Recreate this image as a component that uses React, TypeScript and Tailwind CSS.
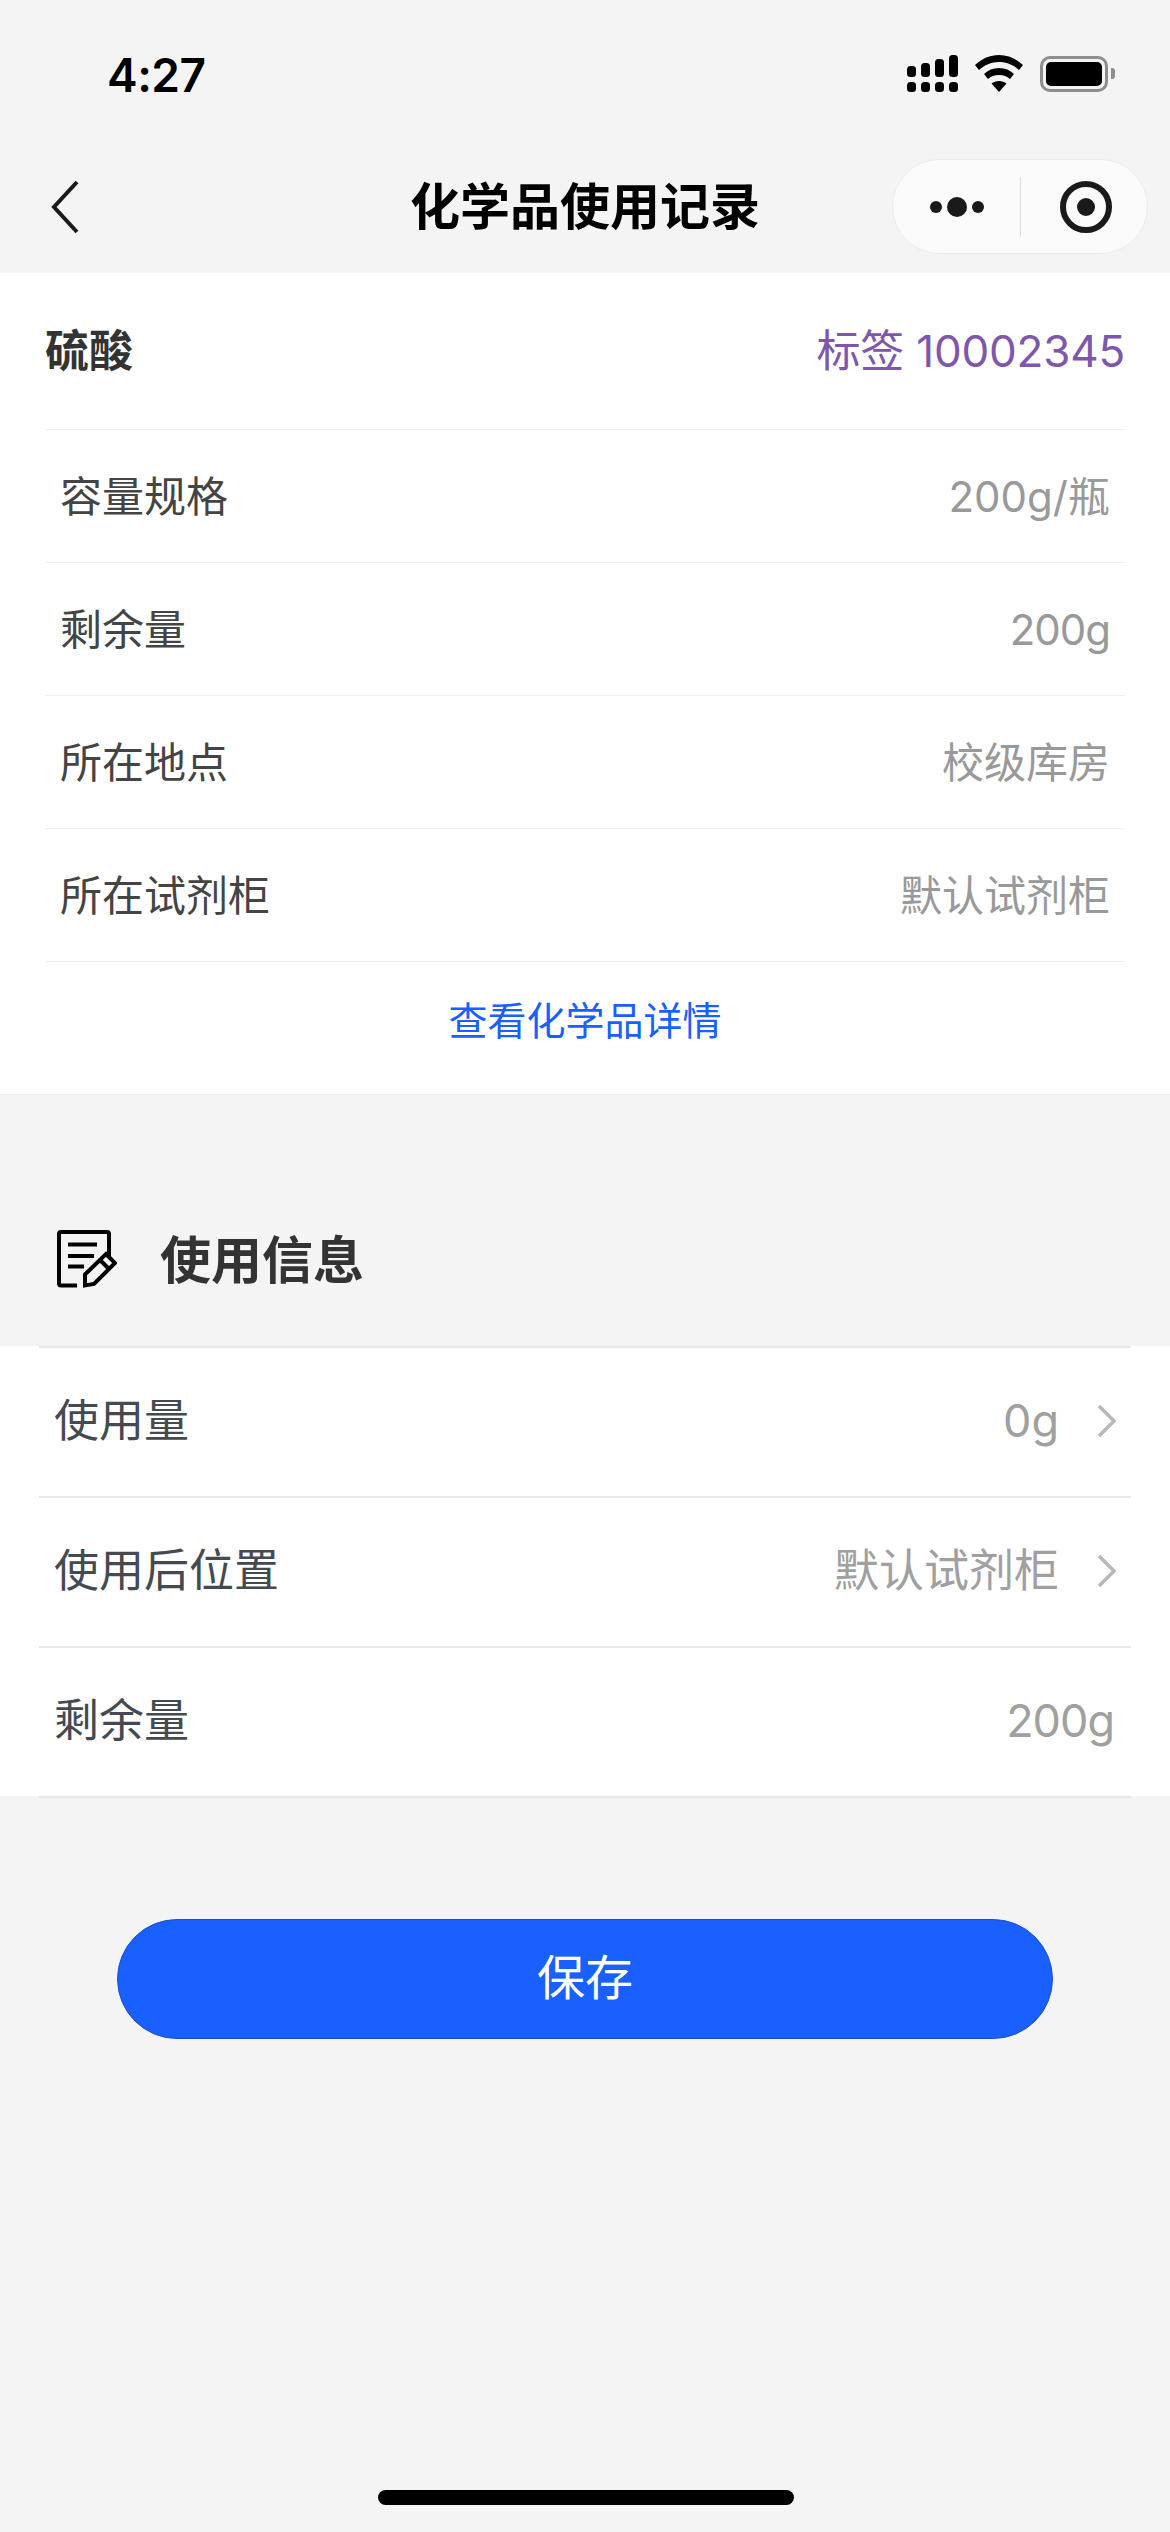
const font = { fontFamily: '"Inter", "Noto Sans CJK SC", sans-serif' };

const chemicalRows = [
  { label: '容量规格', value: '200g/瓶', tight: false },
  { label: '剩余量', value: '200g', tight: true },
  { label: '所在地点', value: '校级库房', tight: false },
  { label: '所在试剂柜', value: '默认试剂柜', tight: false },
];

const usageRows = [
  { label: '使用量', value: '0g', arrow: true, tight: false },
  { label: '使用后位置', value: '默认试剂柜', arrow: true, tight: false },
  { label: '剩余量', value: '200g', arrow: false, tight: true },
];

function SignalIcon() {
  return (
    <svg width="51" height="37" viewBox="0 0 51 37" fill="#000">
      <rect x="0" y="11" width="9" height="11" rx="3.5" />
      <rect x="14" y="8" width="9" height="14" rx="3.5" />
      <rect x="28" y="4" width="9" height="18" rx="3.5" />
      <rect x="42" y="0" width="9" height="22" rx="3.5" />
      <rect x="0" y="27" width="9" height="10" rx="3.5" />
      <rect x="14" y="27" width="9" height="10" rx="3.5" />
      <rect x="28" y="27" width="9" height="10" rx="3.5" />
      <rect x="42" y="27" width="9" height="10" rx="3.5" />
    </svg>
  );
}

function WifiIcon() {
  return (
    <svg width="48" height="37" viewBox="0 0 48 37" fill="#000">
      <path d="M24 0C15 0 7 3.5 0 10l4 5c5.500-5 12-8 20-8s14.500 3 20 8l4-5C41 3.500 33 0 24 0z" />
      <path d="M24 13c-6 0-11 2-15 6l4 5c3-2.500 6.500-4 11-4s8 1.500 11 4l4-5c-4-4-9-6-15-6z" />
      <path d="M24 26c-3 0-5.500 1-7.500 2.500L24 37l7.500-8.500C29.500 27 27 26 24 26z" />
    </svg>
  );
}

function BatteryIcon() {
  return (
    <div className="flex items-center gap-[3px]">
      <div className="w-[68px] h-[36px] rounded-[10px] border-[3px] border-[#8e8e8e] p-[3px]">
        <div className="w-full h-full rounded-[5px] bg-black" />
      </div>
      <div className="w-[4px] h-[11px] rounded-r-[3px] bg-[#8e8e8e]" />
    </div>
  );
}

function EditIcon() {
  return (
    <svg width="60" height="58" viewBox="0 0 60 58" fill="none" stroke="#000" strokeWidth="4">
      <path d="M20 55.500H4a2 2 0 0 1-2-2V4a2 2 0 0 1 2-2h46a2 2 0 0 1 2 2v23" />
      <path d="M11 14.500h29M11 26h26M11 36.500h16" />
      <path d="M28 44.500 49 24l9 9-21 21-9 1.500z" fill="#f4f4f4" />
      <path d="M43 30l9 9" />
    </svg>
  );
}

function Chevron({ className }: { className?: string }) {
  return (
    <svg className={className} width="20" height="34" viewBox="0 0 20 34" fill="none" stroke="#b8b8b8" strokeWidth="3.500">
      <path d="M2 2l15 15L2 32" />
    </svg>
  );
}

function StatusBar() {
  return (
    <div className="h-[132px] flex items-start justify-between pl-[107px] pr-[55px] pt-[55px]">
      <span className="text-[46px] leading-[40px] font-semibold tracking-[-0.5px] text-black">4:27</span>
      <div className="flex items-center">
        <SignalIcon />
        <div className="ml-[17px]">
          <WifiIcon />
        </div>
        <div className="ml-[17px]">
          <BatteryIcon />
        </div>
      </div>
    </div>
  );
}

function NavBar() {
  return (
    <div className="relative h-[141px] flex items-center justify-center">
      <svg className="absolute left-[50px] top-[48px]" width="30" height="54" viewBox="0 0 30 54" fill="none" stroke="#1a1a1a" strokeWidth="4">
        <path d="M27 2 4 27l23 25" />
      </svg>
      <h1 className="text-[50px] leading-[60px] font-semibold text-black mt-[8px]">化学品使用记录</h1>
      <div className="absolute left-[892px] top-[27px] w-[256px] h-[95px] rounded-full bg-[#fafafa] border border-[#ececec] flex items-center">
        <div className="w-[127px] flex items-center justify-center gap-[5px] pl-[1px]">
          <span className="w-[12px] h-[12px] rounded-full bg-[#1a1a1a]" />
          <span className="w-[20px] h-[20px] rounded-full bg-[#1a1a1a]" />
          <span className="w-[12px] h-[12px] rounded-full bg-[#1a1a1a]" />
        </div>
        <div className="w-px h-[60px] bg-[#dcdcdc]" />
        <div className="flex-1 flex items-center justify-center pl-[3px]">
          <div className="w-[52px] h-[52px] rounded-full border-[6px] border-[#1a1a1a] flex items-center justify-center">
            <span className="w-[18px] h-[18px] rounded-full bg-[#1a1a1a]" />
          </div>
        </div>
      </div>
    </div>
  );
}

function ChemicalCard() {
  return (
    <section className="bg-white h-[821px] px-[45px] shadow-[0_1px_1px_#ececec]">
      <div className="h-[157px] flex items-center justify-between border-b border-[#efefef]">
        <span className="text-[44px] font-bold text-[#333333]">硫酸</span>
        <span className="text-[44px] tracking-[-0.2px] text-[#7e57ad]">标签 10002345</span>
      </div>
      {chemicalRows.map((row) => (
        <div key={row.label} className="h-[133px] px-[15px] flex items-center justify-between border-b border-[#efefef]">
          <span className="text-[42px] text-[#444444]">{row.label}</span>
          <span className={`text-[42px] text-[#999999] ${row.tight ? 'tracking-[-1px]' : ''}`}>{row.value}</span>
        </div>
      ))}
      <div className="h-[118px] flex items-center justify-center">
        <span className="text-[39px] text-[#1a5fff]">查看化学品详情</span>
      </div>
    </section>
  );
}

function UsageCard() {
  return (
    <section className="bg-white h-[450px] pl-[39px] pr-[39px]">
      <div className="border-t-2 border-[#e8e8e8]">
        {usageRows.map((row, i) => (
          <div
            key={row.label}
            className={`h-[150px] pl-[15px] pb-[2px] flex items-center justify-between border-b-2 border-[#e8e8e8] ${i === 2 ? 'pr-[17px]' : 'pr-[14px]'}`}
          >
            <span className="text-[45px] text-[#444a50]">{row.label}</span>
            <span className="flex items-center">
              <span className={`text-[45px] text-[#a0a0a0] ${row.tight ? 'tracking-[-1px]' : ''}`}>{row.value}</span>
              {row.arrow && <Chevron className="ml-[38px]" />}
            </span>
          </div>
        ))}
      </div>
    </section>
  );
}

export default function App() {
  return (
    <div className="relative w-[1170px] h-[2532px] bg-[#f4f4f4] overflow-hidden" style={font}>
      <StatusBar />
      <NavBar />
      <ChemicalCard />
      <div className="h-[252px] pl-[57px] pt-[136px] flex items-start">
        <EditIcon />
        <h2 className="ml-[43px] mt-[3px] text-[51px] leading-[56px] font-bold text-[#333333]">使用信息</h2>
      </div>
      <UsageCard />
      <div className="px-[117px] pt-[123px]">
        <button className="w-full h-[120px] rounded-full bg-[#1a5fff] border border-[#1a50d0] text-white text-[48px] pb-[2px]">
          保存
        </button>
      </div>
      <div className="absolute left-[378px] top-[2490px] w-[416px] h-[15px] rounded-full bg-black" />
    </div>
  );
}
